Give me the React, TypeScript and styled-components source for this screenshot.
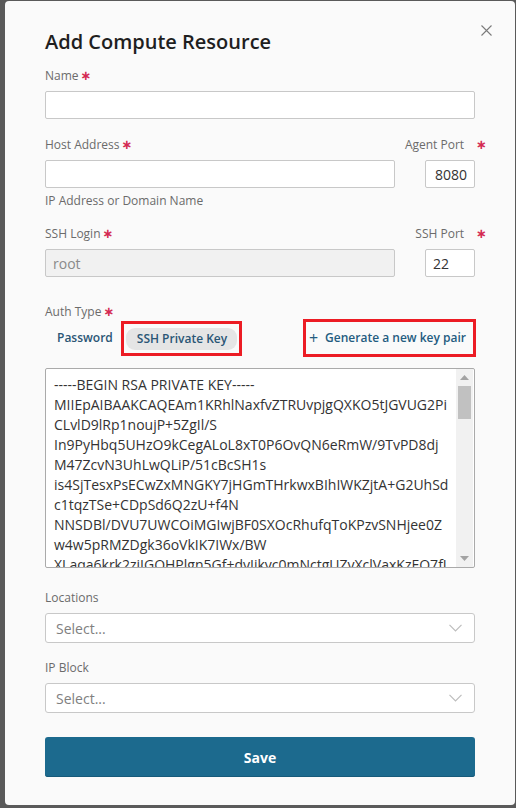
import styled, { createGlobalStyle } from "styled-components";

const GlobalStyle = createGlobalStyle`
  html, body {
    margin: 0;
    padding: 0;
    background: #5a5a5a;
  }
  * {
    box-sizing: border-box;
  }
`;

const KEY_LINES = [
  "-----BEGIN RSA PRIVATE KEY-----",
  "MIIEpAIBAAKCAQEAm1KRhlNaxfvZTRUvpjgQXKO5tJGVUG2Pi",
  "CLvlD9lRp1noujP+5ZgIl/S",
  "In9PyHbq5UHzO9kCegALoL8xT0P6OvQN6eRmW/9TvPD8dj",
  "M47ZcvN3UhLwQLiP/51cBcSH1s",
  "is4SjTesxPsECwZxMNGKY7jHGmTHrkwxBIhIWKZjtA+G2UhSd",
  "c1tqzTSe+CDpSd6Q2zU+f4N",
  "NNSDBl/DVU7UWCOiMGIwjBF0SXOcRhufqToKPzvSNHjee0Z",
  "w4w5pRMZDgk36oVkIK7IWx/BW",
  "XLaqa6krk2ziIGQHPlgn5Gf+dyIikyc0mNctgUZyXclVaxKzEQ7fI",
];

const App = () => {
  return (
    <>
      <GlobalStyle />
      <Backdrop>
        <Modal>
          <CloseButton aria-label="Close">
            <svg width="11" height="11" viewBox="0 0 11 11">
              <path d="M0.5 0.5 L10.5 10.5 M10.5 0.5 L0.5 10.5" stroke="#7a7a7a" strokeWidth="1.1" />
            </svg>
          </CloseButton>

          <Title>Add Compute Resource</Title>

          <Field $top={12}>
            <Label>
              Name <Required>∗</Required>
            </Label>
            <Input />
          </Field>

          <Row $top={18}>
            <Field>
              <Label>
                Host Address <Required>∗</Required>
              </Label>
              <Input />
              <Hint>IP Address or Domain Name</Hint>
            </Field>
            <Field>
              <PortLabel>
                Agent Port <Required>∗</Required>
              </PortLabel>
              <Input $align="right" defaultValue="8080" />
            </Field>
          </Row>

          <Row $top={17}>
            <Field>
              <Label>
                SSH Login <Required>∗</Required>
              </Label>
              <Input $disabled defaultValue="root" readOnly />
            </Field>
            <Field>
              <PortLabel>
                SSH Port <Required>∗</Required>
              </PortLabel>
              <Input defaultValue="22" />
            </Field>
          </Row>

          <Field $top={27}>
            <Label>
              Auth Type <Required>∗</Required>
            </Label>
            <AuthRow>
              <TabGroup>
                <Tab>Password</Tab>
                <Highlight $pad="4px 2px 3px">
                  <Tab $active>SSH Private Key</Tab>
                </Highlight>
              </TabGroup>
              <Highlight $pad="5px 7px 5px 3px">
                <GenerateLink>
                  <PlusSign>+</PlusSign>
                  Generate a new key pair
                </GenerateLink>
              </Highlight>
            </AuthRow>
          </Field>

          <KeyBox>
            <KeyText>
              {KEY_LINES.map((line, i) => (
                <KeyLine key={i}>{line}</KeyLine>
              ))}
            </KeyText>
            <ScrollTrack>
              <ScrollArrow>
                <svg width="9" height="5" viewBox="0 0 9 5">
                  <path d="M4.5 0 L9 5 L0 5 Z" fill="#a3a3a3" />
                </svg>
              </ScrollArrow>
              <ScrollThumb />
              <ScrollSpacer />
              <ScrollArrow>
                <svg width="9" height="5" viewBox="0 0 9 5">
                  <path d="M0 0 L9 0 L4.5 5 Z" fill="#a3a3a3" />
                </svg>
              </ScrollArrow>
            </ScrollTrack>
          </KeyBox>

          <Field $top={22}>
            <Label>Locations</Label>
            <Select>
              <Placeholder>Select...</Placeholder>
              <Chevron />
            </Select>
          </Field>

          <Field $top={17}>
            <Label>IP Block</Label>
            <Select>
              <Placeholder>Select...</Placeholder>
              <Chevron />
            </Select>
          </Field>

          <SaveButton>Save</SaveButton>
        </Modal>
      </Backdrop>
    </>
  );
};

const Chevron = () => (
  <svg width="13" height="8" viewBox="0 0 13 8">
    <path d="M0.5 0.8 L6.5 6.8 L12.5 0.8" fill="none" stroke="#bdbdbd" strokeWidth="1.2" />
  </svg>
);

export default App;

const Backdrop = styled.div`
  min-height: 100vh;
  padding: 1px 1px 3px 5px;
  font-family: "Open Sans", "Liberation Sans", sans-serif;
`;

const Modal = styled.div`
  position: relative;
  width: 510px;
  height: 804px;
  background: #fafafa;
  border-radius: 4px;
  padding: 27px 40px 0 40px;
  display: flex;
  flex-direction: column;
`;

const CloseButton = styled.button`
  position: absolute;
  top: 24px;
  right: 23px;
  width: 11px;
  height: 11px;
  padding: 0;
  border: none;
  background: none;
  display: flex;
  cursor: pointer;
`;

const Title = styled.h2`
  margin: 0;
  font-size: 20px;
  line-height: 28px;
  font-weight: 600;
  color: #1f1f1f;
`;

const Field = styled.div<{ $top?: number }>`
  display: flex;
  flex-direction: column;
  margin-top: ${(p) => p.$top ?? 0}px;
  min-width: 0;
`;

const Row = styled.div<{ $top?: number }>`
  display: grid;
  grid-template-columns: 1fr 50px;
  column-gap: 30px;
  margin-top: ${(p) => p.$top ?? 0}px;
`;

const Label = styled.label`
  display: flex;
  align-items: center;
  gap: 2px;
  font-size: 12px;
  line-height: 16px;
  color: #6b6b6b;
  margin-bottom: 7px;
  white-space: nowrap;
`;

const PortLabel = styled(Label)`
  justify-content: flex-end;
  gap: 12px;
  margin-right: -12px;
`;

const Required = styled.span`
  color: #d42a52;
  font-family: "DejaVu Sans", sans-serif;
  font-size: 13px;
  line-height: 16px;
  font-weight: bold;
`;

const Input = styled.input<{ $disabled?: boolean; $align?: string }>`
  width: 100%;
  height: 28px;
  border: 1px solid #c8c8c8;
  border-radius: 2px;
  background: ${(p) => (p.$disabled ? "#f1f1f1" : "#fff")};
  color: ${(p) => (p.$disabled ? "#8a8a8a" : "#333")};
  font-family: "Open Sans", sans-serif;
  font-size: 14px;
  padding: 0 7px;
  text-align: ${(p) => p.$align ?? "left"};
  outline: none;
`;

const Hint = styled.div`
  font-size: 12px;
  line-height: 16px;
  color: #6b6b6b;
  margin-top: 5px;
`;

const AuthRow = styled.div`
  display: flex;
  align-items: center;
  justify-content: space-between;
  margin-top: -8px;
  margin-right: -1px;
`;

const TabGroup = styled.div`
  display: flex;
  align-items: center;
  margin-left: 1px;
`;

const Highlight = styled.div<{ $pad: string }>`
  border: 3px solid #ec1c24;
  padding: ${(p) => p.$pad};
  display: flex;
  align-items: center;
`;

const Tab = styled.div<{ $active?: boolean }>`
  height: 22px;
  padding: 0 10px 0 11px;
  border-radius: 9px;
  background: ${(p) => (p.$active ? "#e5e5e5" : "transparent")};
  color: #2a5675;
  font-size: 12px;
  font-weight: 600;
  line-height: 22px;
  white-space: nowrap;
  margin-right: ${(p) => (p.$active ? 0 : -2)}px;
`;

const GenerateLink = styled.div`
  display: flex;
  align-items: center;
  gap: 7px;
  color: #245c80;
  font-size: 12px;
  font-weight: 600;
  line-height: 22px;
  white-space: nowrap;
`;

const PlusSign = styled.span`
  font-size: 16px;
  font-weight: 400;
  line-height: 22px;
`;

const KeyBox = styled.div`
  display: flex;
  height: 200px;
  margin-top: 11px;
  border: 1px solid #aaa;
  border-radius: 2px;
  background: #fff;
  overflow: hidden;
`;

const KeyText = styled.div`
  flex: 1;
  min-width: 0;
  overflow: hidden;
  padding: 6px 8px;
  color: #333;
  font-size: 14px;
  line-height: 20px;
`;

const KeyLine = styled.div`
  white-space: nowrap;
`;

const ScrollTrack = styled.div`
  width: 17px;
  flex-shrink: 0;
  background: #f1f1f1;
  display: flex;
  flex-direction: column;
  margin-right: 1px;
`;

const ScrollArrow = styled.div`
  height: 17px;
  display: flex;
  align-items: center;
  justify-content: center;
`;

const ScrollThumb = styled.div`
  height: 33px;
  margin: 0 2px;
  background: #c1c1c1;
`;

const ScrollSpacer = styled.div`
  flex: 1;
`;

const Select = styled.div`
  height: 30px;
  border: 1px solid #c8c8c8;
  border-radius: 3px;
  background: #fff;
  display: flex;
  align-items: center;
  justify-content: space-between;
  padding: 0 12px 0 10px;
`;

const Placeholder = styled.span`
  color: #808080;
  font-size: 14px;
`;

const SaveButton = styled.button`
  margin-top: 24px;
  height: 40px;
  border: none;
  border-radius: 3px;
  background: #1c6a8e;
  box-shadow: inset 0 -1px 0 #165a7a;
  color: #fff;
  font-family: "Open Sans", sans-serif;
  font-size: 14px;
  font-weight: 700;
  cursor: pointer;
`;
